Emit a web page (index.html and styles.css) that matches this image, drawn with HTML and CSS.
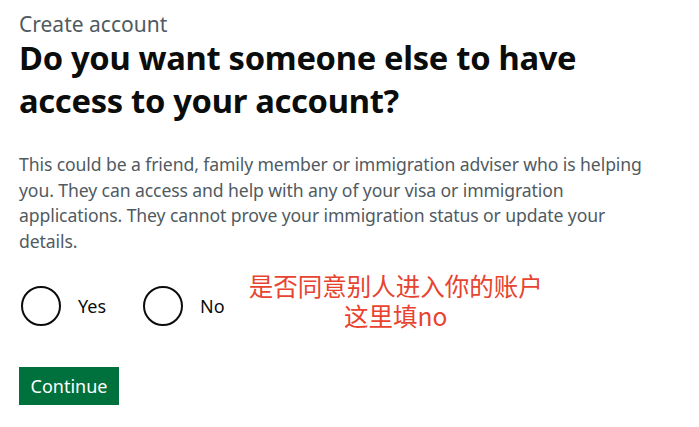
FILE: index.html
```html
<!DOCTYPE html>
<html lang="en">
<head>
<meta charset="utf-8">
<title>Create account</title>
<link rel="stylesheet" href="styles.css">
</head>
<body>
<main class="page">
  <span class="caption">Create account</span>
  <h1 class="heading">Do you want someone else to have access to your account?</h1>
  <p class="body">This could be a friend, family member or immigration adviser who is helping you. They can access and help with any of your visa or immigration applications. They cannot prove your immigration status or update your details.</p>
  <div class="radio-row">
    <div class="radios">
      <label class="radio"><span class="circle"></span><span class="radio-label">Yes</span></label>
      <label class="radio"><span class="circle"></span><span class="radio-label">No</span></label>
    </div>
    <div class="note">
      <div class="note-line">是否同意别人进入你的账户</div>
      <div class="note-line">这里填no</div>
    </div>
  </div>
  <button class="button">Continue</button>
</main>
</body>
</html>
```
FILE: styles.css
```css
* { box-sizing: border-box; }
html, body { margin: 0; padding: 0; background: #fff; }
body { font-family: "Noto Sans", "Liberation Sans", sans-serif; color: #0b0c0c; }
.page { padding: 12px 19px 0 19px; display: flex; flex-direction: column; align-items: flex-start; }
.caption { font-size: 21px; line-height: 24px; color: #505a5f; }
.heading { margin: 0; font-size: 32.7px; line-height: 43px; font-weight: 700; width: 620px; letter-spacing: -0.3px; }
.body { margin: 30px 0 0 0; font-size: 17.6px; line-height: 25.7px; color: #505a5f; width: 632px; letter-spacing: -0.1px; }
.radio-row { display: flex; align-items: flex-start; margin-top: 16px; }
.radios { display: flex; gap: 35px; padding-top: 15px; }
.radio { display: flex; align-items: center; }
.circle { width: 40px; height: 40px; border: 2px solid #0b0c0c; border-radius: 50%; margin-left: 2px; }
.radio-label { font-size: 18px; color: #0b0c0c; margin-left: 17px; }
.note { margin-left: 24px; font-family: "Noto Sans CJK SC", sans-serif; color: #e8432f; font-size: 24.5px; text-align: center; display: flex; flex-direction: column; }
.note-line { line-height: 30px; }
.button { margin-top: 36px; background: #00703c; color: #fff; border: 0; box-shadow: 0 2px 0 #002d18; font-family: inherit; font-size: 18px; line-height: 24px; padding: 7px 0; width: 100px; height: 38px; text-align: center; }
```
